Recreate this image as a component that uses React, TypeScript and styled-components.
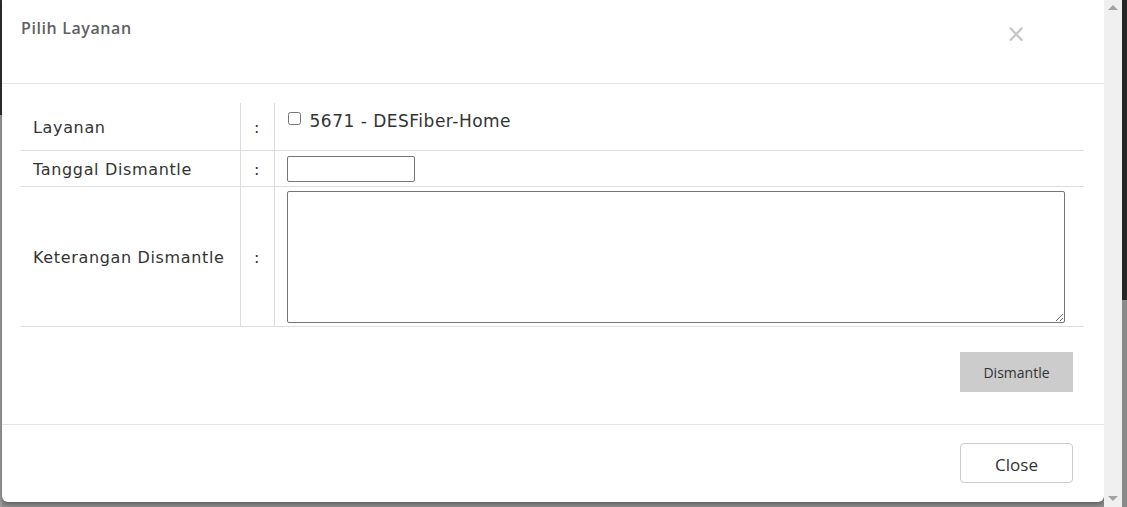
import styled, { createGlobalStyle } from "styled-components";

const GlobalStyle = createGlobalStyle`
	html, body {
		margin: 0;
		padding: 0;
		background: #8a8a8a;
		overflow: hidden;
	}
`;

const Screen = styled.div`
	display: flex;
	width: 1127px;
	height: 507px;
	background: #8d8d8d;
`;

const LeftEdge = styled.div`
	width: 2px;
	background: linear-gradient(#2e2e2e 0 115px, #9a9a9a 115px);
`;

const Modal = styled.div`
	width: 1102px;
	height: 502px;
	background: #fff;
	border-radius: 0 0 6px 6px;
	box-shadow: 0 2px 4px rgba(0, 0, 0, 0.35);
	display: flex;
	flex-direction: column;
	font-family: "Open Sans", "Noto Sans", sans-serif;
`;

const Header = styled.div`
	height: 84px;
	border-bottom: 1px solid #e5e5e5;
	display: flex;
	justify-content: space-between;
	align-items: flex-start;
	padding: 0 78px 0 19px;
	box-sizing: border-box;
`;

const Title = styled.h4`
	margin: 16px 0 0;
	font-size: 16px;
	font-weight: 600;
	letter-spacing: 0.6px;
	color: #616161;
	line-height: 24px;
`;

const CloseX = styled.span`
	margin-top: 22px;
	font-size: 24px;
	line-height: 24px;
	color: #c4c4c4;
	font-family: "DejaVu Sans", sans-serif;
`;

const Body = styled.div`
	padding: 19px 19px 0;
	flex: 1;
	display: flex;
	flex-direction: column;
	border-bottom: 1px solid #e5e5e5;
`;

const Table = styled.table`
	width: 1063px;
	border-collapse: collapse;
	font-family: "DejaVu Sans", Verdana, sans-serif;
	font-size: 16px;
	letter-spacing: 0.65px;
	color: #333;
`;

const Row = styled.tr<{ $h: number }>`
	height: ${(p) => p.$h}px;
	border-bottom: 1px solid #ddd;
`;

const Label = styled.td`
	width: 219px;
	padding: 2px 12px 0;
	box-sizing: border-box;
	border-right: 1px solid #ddd;
	vertical-align: middle;
`;

const Colon = styled.td`
	width: 34px;
	text-align: center;
	border-right: 1px solid #ddd;
	padding: 2px 0 0;
	box-sizing: border-box;
`;

const Value = styled.td<{ $top?: number }>`
	padding: ${(p) => p.$top ?? 4}px 12px 0;
	vertical-align: top;
`;

const CheckLabel = styled.label`
	display: inline-flex;
	align-items: flex-start;
	gap: 9px;
	font-size: 17px;
	letter-spacing: 0.5px;
	line-height: 20px;

	input {
		margin: 1px 0 0 1px;
		width: 13px;
		height: 13px;
	}
`;

const DateInput = styled.input`
	width: 128px;
	height: 26px;
	box-sizing: border-box;
	border: 1px solid #767676;
	border-radius: 2px;
	margin: 0;
	display: block;
`;

const Notes = styled.textarea`
	width: 778px;
	height: 132px;
	box-sizing: border-box;
	border: 1px solid #767676;
	border-radius: 2px;
	margin: 0;
	display: block;
`;

const Actions = styled.div`
	display: flex;
	justify-content: flex-end;
	padding: 25px 12px 0 0;
`;

const GreyButton = styled.button`
	width: 113px;
	height: 40px;
	border: none;
	background: #cccccc;
	color: #333;
	font-family: "Open Sans", "Noto Sans", sans-serif;
	font-size: 14px;
	padding: 1px 0 0;
`;

const Footer = styled.div`
	height: 77px;
	display: flex;
	justify-content: flex-end;
	align-items: flex-start;
	padding: 18px 31px 0 0;
	box-sizing: border-box;
`;

const OutlineButton = styled.button`
	width: 113px;
	height: 40px;
	background: #fff;
	border: 1px solid #ccc;
	border-radius: 4px;
	color: #333;
	font-family: "Open Sans", "Noto Sans", sans-serif;
	font-size: 17px;
	padding: 3px 0 0;
`;

const Scrollbar = styled.div`
	width: 18px;
	height: 507px;
	background: #f0f0f0;
	display: flex;
	flex-direction: column;
	justify-content: space-between;
	align-items: center;
	padding: 5px 0 6px;
	box-sizing: border-box;
`;

const Arrow = styled.span<{ $down?: boolean }>`
	width: 0;
	height: 0;
	border-left: 5px solid transparent;
	border-right: 5px solid transparent;
	${(p) =>
		p.$down
			? "border-top: 5px solid #a3a3a3;"
			: "border-bottom: 5px solid #a3a3a3;"}
`;

const RightEdge = styled.div`
	width: 5px;
	background: linear-gradient(#262626 0 300px, #8a8a8a 300px);
`;

export default function App() {
	return (
		<Screen>
			<GlobalStyle />
			<LeftEdge />
			<Modal>
				<Header>
					<Title>Pilih Layanan</Title>
					<CloseX>×</CloseX>
				</Header>
				<Body>
					<Table>
						<tbody>
							<Row $h={47}>
								<Label>Layanan</Label>
								<Colon>:</Colon>
								<Value $top={7}>
									<CheckLabel>
										<input type="checkbox" />
										5671 - DESFiber-Home
									</CheckLabel>
								</Value>
							</Row>
							<Row $h={36}>
								<Label>Tanggal Dismantle</Label>
								<Colon>:</Colon>
								<Value $top={5}>
									<DateInput type="text" />
								</Value>
							</Row>
							<Row $h={140}>
								<Label>Keterangan Dismantle</Label>
								<Colon>:</Colon>
								<Value $top={4}>
									<Notes />
								</Value>
							</Row>
						</tbody>
					</Table>
					<Actions>
						<GreyButton>Dismantle</GreyButton>
					</Actions>
				</Body>
				<Footer>
					<OutlineButton>Close</OutlineButton>
				</Footer>
			</Modal>
			<Scrollbar>
				<Arrow />
				<Arrow $down />
			</Scrollbar>
			<RightEdge />
		</Screen>
	);
}
